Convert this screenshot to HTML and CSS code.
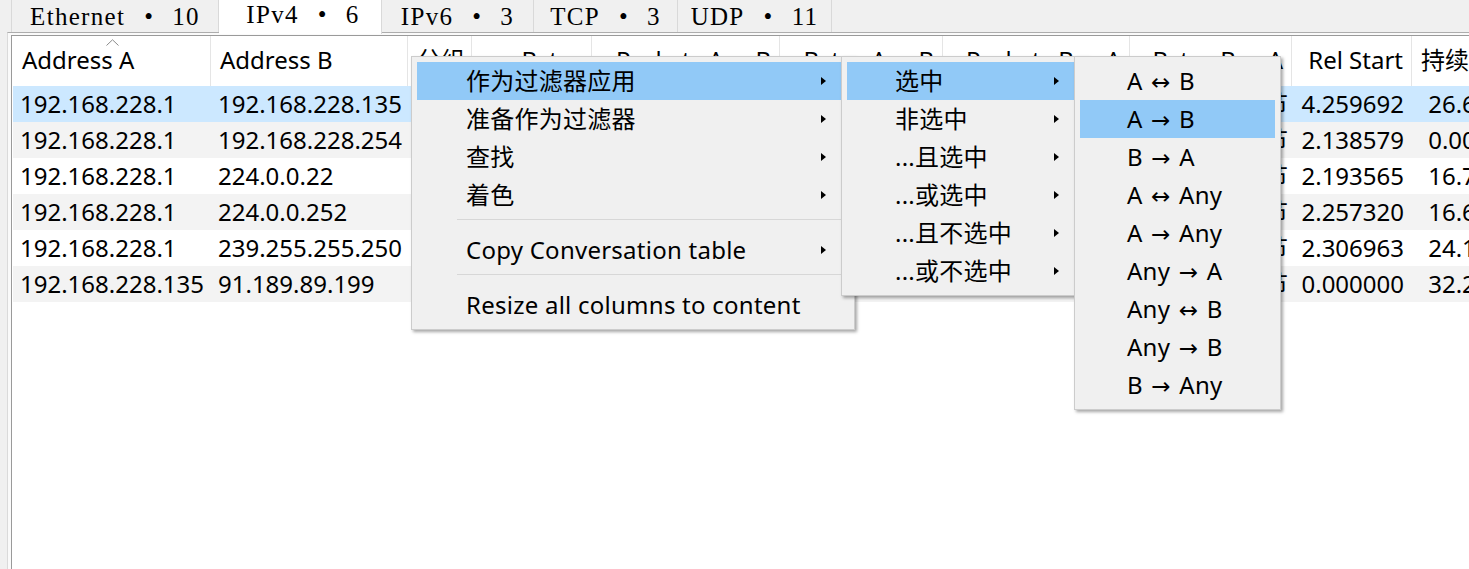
FILE: index.html
```html
<!DOCTYPE html>
<html lang="zh-CN">
<head>
<meta charset="utf-8">
<title>Conversations</title>
<link rel="stylesheet" href="styles.css">
</head>
<body>
<div class="tabbar">
  <div class="tab tab-eth"><span>Ethernet</span><span class="dot">•</span><span>10</span></div>
  <div class="tab tab-ipv4 active"><span>IPv4</span><span class="dot">•</span><span>6</span></div>
  <div class="tab tab-ipv6"><span>IPv6</span><span class="dot">•</span><span>3</span></div>
  <div class="tab tab-tcp"><span>TCP</span><span class="dot">•</span><span>3</span></div>
  <div class="tab tab-udp"><span>UDP</span><span class="dot">•</span><span>11</span></div>
</div>
<div class="pane">
  <div class="frame">
    <div class="grid head">
      <div class="hc sorted">Address A<svg class="sort" width="13" height="7" viewBox="0 0 13 7"><polyline points="0.5,6.5 6.5,0.8 12.5,6.5" fill="none" stroke="#8a8a8a" stroke-width="1"/></svg></div>
      <div class="hc">Address B</div>
      <div class="hc num">分组</div>
      <div class="hc num">Bytes</div>
      <div class="hc num">Packets A <span class="arr">→</span> B</div>
      <div class="hc num">Bytes A <span class="arr">→</span> B</div>
      <div class="hc num">Packets B <span class="arr">→</span> A</div>
      <div class="hc num">Bytes B <span class="arr">→</span> A</div>
      <div class="hc num">Rel Start</div>
      <div class="hc num">持续时间</div>
    </div>
    <div class="grid row sel">
      <div class="c first">192.168.228.1</div><div class="c">192.168.228.135</div>
      <div class="c num">6</div><div class="c num">1,024 字节</div><div class="c num">3</div><div class="c num">512 字节</div><div class="c num">3</div><div class="c num b2a">512 字节</div>
      <div class="c num">4.259692</div><div class="c num">26.6361</div>
    </div>
    <div class="grid row alt">
      <div class="c first">192.168.228.1</div><div class="c">192.168.228.254</div>
      <div class="c num">2</div><div class="c num">684 字节</div><div class="c num">1</div><div class="c num">342 字节</div><div class="c num">1</div><div class="c num b2a">342 字节</div>
      <div class="c num">2.138579</div><div class="c num">0.00172</div>
    </div>
    <div class="grid row">
      <div class="c first">192.168.228.1</div><div class="c">224.0.0.22</div>
      <div class="c num">4</div><div class="c num">216 字节</div><div class="c num">4</div><div class="c num">216 字节</div><div class="c num">0</div><div class="c num b2a">0 字节</div>
      <div class="c num">2.193565</div><div class="c num">16.7254</div>
    </div>
    <div class="grid row alt">
      <div class="c first">192.168.228.1</div><div class="c">224.0.0.252</div>
      <div class="c num">8</div><div class="c num">560 字节</div><div class="c num">8</div><div class="c num">560 字节</div><div class="c num">0</div><div class="c num b2a">0 字节</div>
      <div class="c num">2.257320</div><div class="c num">16.6417</div>
    </div>
    <div class="grid row">
      <div class="c first">192.168.228.1</div><div class="c">239.255.255.250</div>
      <div class="c num">12</div><div class="c num">2,604 字节</div><div class="c num">12</div><div class="c num">2,604 字节</div><div class="c num">0</div><div class="c num b2a">0 字节</div>
      <div class="c num">2.306963</div><div class="c num">24.1533</div>
    </div>
    <div class="grid row alt">
      <div class="c first">192.168.228.135</div><div class="c">91.189.89.199</div>
      <div class="c num">6</div><div class="c num">412 字节</div><div class="c num">3</div><div class="c num">206 字节</div><div class="c num">3</div><div class="c num b2a">206 字节</div>
      <div class="c num">0.000000</div><div class="c num">32.2218</div>
    </div>
  </div>
</div>

<div class="menu menu-main">
  <div class="mi hl"><span>作为过滤器应用</span><span class="tri"></span></div>
  <div class="mi"><span>准备作为过滤器</span><span class="tri"></span></div>
  <div class="mi"><span>查找</span><span class="tri"></span></div>
  <div class="mi"><span>着色</span><span class="tri"></span></div>
  <div class="sep"></div>
  <div class="mi"><span>Copy Conversation table</span><span class="tri"></span></div>
  <div class="sep"></div>
  <div class="mi"><span>Resize all columns to content</span></div>
</div>

<div class="menu menu-sub">
  <div class="mi hl"><span>选中</span><span class="tri"></span></div>
  <div class="mi"><span>非选中</span><span class="tri"></span></div>
  <div class="mi"><span>...且选中</span><span class="tri"></span></div>
  <div class="mi"><span>...或选中</span><span class="tri"></span></div>
  <div class="mi"><span>...且不选中</span><span class="tri"></span></div>
  <div class="mi"><span>...或不选中</span><span class="tri"></span></div>
</div>

<div class="menu menu-dir">
  <div class="mi"><span>A <span class="arr">↔</span> B</span></div>
  <div class="mi hl"><span>A <span class="arr">→</span> B</span></div>
  <div class="mi"><span>B <span class="arr">→</span> A</span></div>
  <div class="mi"><span>A <span class="arr">↔</span> Any</span></div>
  <div class="mi"><span>A <span class="arr">→</span> Any</span></div>
  <div class="mi"><span>Any <span class="arr">→</span> A</span></div>
  <div class="mi"><span>Any <span class="arr">↔</span> B</span></div>
  <div class="mi"><span>Any <span class="arr">→</span> B</span></div>
  <div class="mi"><span>B <span class="arr">→</span> Any</span></div>
</div>
</body>
</html>
```
FILE: styles.css
```css
html, body {
  margin: 0;
  padding: 0;
}
body {
  width: 1469px;
  height: 569px;
  overflow: hidden;
  background: #f0f0f0;
  position: relative;
  display: flex;
  flex-direction: column;
  color: #000;
}

/* ---------- tabs ---------- */
.tabbar {
  display: flex;
  height: 32px;
  padding-left: 11px;
  font-family: "Liberation Serif", "Noto Sans CJK SC", serif;
  font-size: 25px;
  letter-spacing: 1.3px;
  position: relative;
  z-index: 2;
  flex: none;
}
.tab {
  box-sizing: border-box;
  height: 32px;
  line-height: 33px;
  display: flex;
  justify-content: center;
  border-right: 1px solid #d9d9d9;
  background: #f0f0f0;
  white-space: nowrap;
}
.tab:first-child { border-left: 1px solid #d9d9d9; }
.tab .dot { margin: 0 18px 0 19px; }
.tab.active {
  background: #ffffff;
  height: 34px;
  line-height: 30px;
  padding-left: 6px;
}
.tab-eth { width: 208px; }
.tab-ipv4 { width: 163px; }
.tab-ipv6 { width: 152px; }
.tab-tcp { width: 144px; }
.tab-udp { width: 154px; }

/* ---------- pane / table ---------- */
.pane {
  flex: 1;
  min-height: 0;
  display: flex;
  flex-direction: column;
  margin-left: 7px;
  border-top: 1px solid #adadad;
  border-left: 1px solid #dadada;
  background: #fafafa;
  padding: 2px 0 0 3px;
  position: relative;
  z-index: 1;
}
.frame {
  flex: 1;
  border: 1px solid #9a9a9a;
  border-right: none;
  border-bottom: none;
  background: #ffffff;
  padding-left: 1px;
  overflow: hidden;
  font-family: "Noto Sans", "Noto Sans CJK SC", sans-serif;
  font-size: 24px;
}
.grid {
  display: grid;
  grid-template-columns: 198px 197px 64px 120px 188px 163px 187px 162px 120px 113px;
  white-space: nowrap;
}
.head {
  height: 50px;
  line-height: 48px;
}
.hc {
  position: relative;
  padding: 0 8px 0 9px;
  border-right: 1px solid #e5e5e5;
  overflow: hidden;
}
.hc.num { text-align: right; }
.hc.sorted { overflow: visible; }
.sort {
  position: absolute;
  left: 50%;
  top: 3px;
  margin-left: -6px;
  display: block;
}
.row {
  height: 36px;
  line-height: 35px;
  background: #ffffff;
}
.row.alt { background: #f3f3f3; }
.row.sel { background: #cce8ff; }
.c {
  padding: 0 8px 0 7px;
  overflow: hidden;
}
.c.num { text-align: right; }
.c.b2a { padding-right: 4px; }
.arr {
  font-family: "DejaVu Sans", sans-serif;
  font-size: 23px;
}

/* ---------- context menus ---------- */
.menu {
  position: absolute;
  top: 56px;
  box-sizing: border-box;
  background: #f0f0f0;
  border: 1px solid #cccccc;
  padding: 5px;
  box-shadow: 2px 2px 3px rgba(0, 0, 0, 0.35);
  font-family: "Noto Sans", "Noto Sans CJK SC", sans-serif;
  font-size: 24px;
  letter-spacing: 0.25px;
  z-index: 5;
  white-space: nowrap;
}
.menu-main { left: 411px; width: 444px; }
.menu-sub { left: 841px; width: 247px; z-index: 6; }
.menu-dir { left: 1074px; width: 207px; z-index: 7; }

.mi {
  display: flex;
  align-items: center;
  height: 38px;
  line-height: 38px;
  padding: 0 23px 0 48px;
}
.menu-main .mi { padding-left: 49px; }
.menu-dir .mi { padding-left: 47px; }
.mi.hl { background: #91c9f7; }
.tri {
  margin-left: auto;
  width: 0;
  height: 0;
  border-left: 5px solid #000;
  border-top: 4px solid transparent;
  border-bottom: 4px solid transparent;
}
.sep {
  height: 17px;
  box-sizing: border-box;
  padding-top: 5px;
}
.sep::before {
  content: "";
  display: block;
  height: 1px;
  margin-left: 40px;
  background: #d7d7d7;
}
.menu .arr { margin: 0 2px; }
```
